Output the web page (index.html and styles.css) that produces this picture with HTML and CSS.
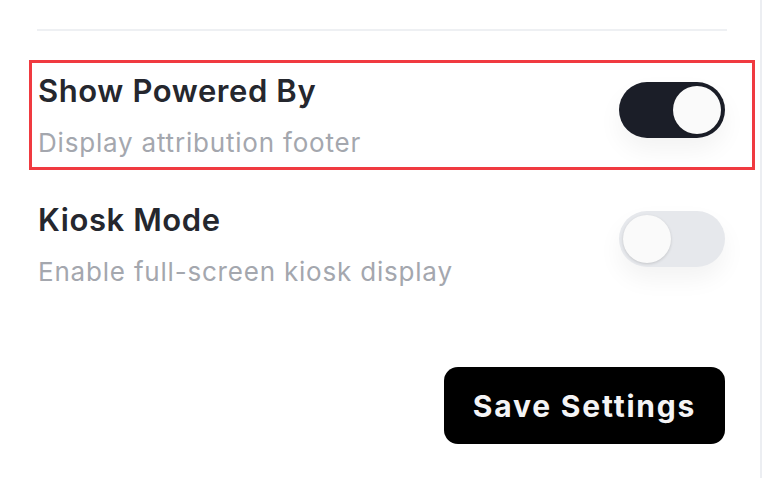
FILE: index.html
```html
<!DOCTYPE html>
<html>
<head>
<meta charset="utf-8">
<link rel="stylesheet" href="styles.css">
</head>
<body>
<div class="panel">
  <div class="divider"></div>
  <div class="row highlighted">
    <div class="text">
      <div class="title">Show Powered By</div>
      <div class="desc">Display attribution footer</div>
    </div>
    <div class="toggle on"><div class="knob"></div></div>
  </div>
  <div class="row plain">
    <div class="text">
      <div class="title">Kiosk Mode</div>
      <div class="desc">Enable full-screen kiosk display</div>
    </div>
    <div class="toggle off"><div class="knob"></div></div>
  </div>
  <div class="actions">
    <button class="save">Save Settings</button>
  </div>
</div>
</body>
</html>
```
FILE: styles.css
```css
html, body {
  margin: 0;
  padding: 0;
  background: #ffffff;
}
body {
  font-family: Inter, "Noto Sans", sans-serif;
  width: 781px;
  height: 492px;
  overflow: hidden;
}
.panel {
  width: 762px;
  height: 478px;
  border-right: 2px solid #eceef2;
  box-sizing: border-box;
  padding: 29px 35px 0 38px;
}
.divider {
  height: 2px;
  background: #eef0f3;
  margin-left: -1px;
  margin-right: -2px;
}
.row {
  display: flex;
  align-items: flex-start;
  justify-content: space-between;
}
.highlighted {
  margin: 29px -30px 0 -9px;
  padding: 10px 27px 7px 6px;
  border: 3px solid #f03a40;
}
.plain {
  margin-top: 32px;
}
.title {
  font-size: 31px;
  font-weight: 600;
  color: #25272e;
  letter-spacing: 0.6px;
  line-height: 36px;
}
.desc {
  font-size: 26px;
  font-weight: 400;
  color: #a4a7ae;
  letter-spacing: 0.8px;
  line-height: 34px;
  margin-top: 17px;
}
.toggle {
  width: 106px;
  height: 56px;
  margin-top: 9px;
  border-radius: 28px;
  box-sizing: border-box;
  padding: 4px;
  display: flex;
  box-shadow: 0 12px 24px rgba(0,0,0,0.05);
}
.toggle.on {
  background: #1b1e28;
  justify-content: flex-end;
}
.toggle.off {
  background: #e6e8ec;
  justify-content: flex-start;
}
.knob {
  width: 48px;
  height: 48px;
  border-radius: 50%;
  background: #fafafa;
  box-shadow: 0 1px 3px rgba(0,0,0,0.15);
}
.actions {
  display: flex;
  justify-content: flex-end;
  margin-top: 78px;
}
.save {
  width: 281px;
  height: 77px;
  border: none;
  border-radius: 14px;
  background: #000000;
  color: #f4f4f6;
  font-family: Inter, "Noto Sans", sans-serif;
  font-size: 30px;
  font-weight: 700;
  letter-spacing: 1.8px;
  padding: 0;
}
```
